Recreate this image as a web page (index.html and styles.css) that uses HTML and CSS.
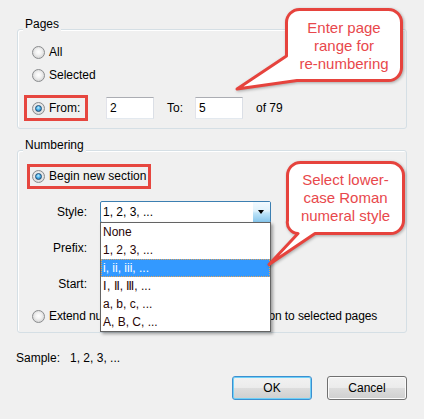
FILE: index.html
```html
<!DOCTYPE html>
<html>
<head>
<meta charset="utf-8">
<link rel="stylesheet" href="styles.css">
</head>
<body>
<div class="dialog">
  <section class="group pages">
    <span class="group-title">Pages</span>
    <div class="opt"><span class="radio"></span>All</div>
    <div class="opt"><span class="radio"></span>Selected</div>
    <div class="range">
      <div class="hl hl-from"><span class="radio on"></span>From:</div>
      <span class="field f-from">2</span>
      <span class="lbl-to">To:</span>
      <span class="field f-to">5</span>
      <span class="of">of 79</span>
    </div>
  </section>

  <section class="group numbering">
    <span class="group-title">Numbering</span>
    <div class="hl hl-begin"><span class="radio on"></span>Begin new section</div>
    <div class="form">
      <span class="lbl">Style:</span>
      <div class="combo-wrap">
        <div class="combo"><span class="combo-text">1, 2, 3, ...</span><span class="combo-btn"><span class="arrow"></span></span></div>
        <ul class="list">
          <li>None</li>
          <li>1, 2, 3, ...</li>
          <li class="sel">i, ii, iii, ...</li>
          <li>Ⅰ, Ⅱ, Ⅲ, ...</li>
          <li>a, b, c, ...</li>
          <li>A, B, C, ...</li>
        </ul>
      </div>
      <span class="lbl">Prefix:</span>
      <span class="field f-prefix"></span>
      <span class="lbl">Start:</span>
      <span class="field f-start"></span>
    </div>
    <div class="opt extend"><span class="radio"></span>Extend numbering used in preceding section to selected pages</div>
  </section>

  <div class="sample"><span>Sample:</span><span>1, 2, 3, ...</span></div>

  <div class="buttons">
    <button class="btn default">OK</button>
    <button class="btn">Cancel</button>
  </div>
</div>

<svg class="callouts" width="424" height="419" viewBox="0 0 424 419">
  <path class="bubble" d="M299.5 9.5 H388.5 A13 13 0 0 1 401.5 22.5 V67.5 A13 13 0 0 1 388.5 80.5 H297 L237 89 L286.5 56 V22.5 A13 13 0 0 1 299.5 9.5 Z"/>
  <path class="bubble" d="M300.5 162.5 H390.5 A13 13 0 0 1 403.5 175.5 V220.5 A13 13 0 0 1 390.5 233.5 H315 L269 264.5 L298 233.5 A11 11 0 0 1 287.5 220.5 V175.5 A13 13 0 0 1 300.5 162.5 Z"/>
</svg>
<p class="callout-text c1">Enter page<br>range for<br>re-numbering</p>
<p class="callout-text c2">Select lower-<br>case Roman<br>numeral style</p>
</body>
</html>
```

FILE: styles.css
```css
html, body {
  margin: 0;
  padding: 0;
}
body {
  width: 424px;
  height: 419px;
  background: #f0f0f0;
  font: 12px/15px "Liberation Sans", Arial, sans-serif;
  color: #000;
  position: relative;
  overflow: hidden;
}
.dialog {
  padding: 0 17px;
}
.group {
  position: relative;
  border: 1px solid #d5dfe5;
  border-radius: 3px;
  padding: 0 14px 7px;
  box-shadow: inset 1px 1px 0 #fff;
}
.group-title {
  position: absolute;
  left: 5px;
  top: -13px;
  padding: 0 2px;
  line-height: 15px;
  background: #f0f0f0;
}
.pages {
  margin-top: 29px;
  padding-top: 11px;
}
.numbering {
  margin-top: 21px;
  padding-top: 13px;
  padding-bottom: 6px;
}
.opt {
  display: flex;
  align-items: center;
  height: 23px;
  white-space: nowrap;
}
.radio {
  flex: none;
  position: relative;
  box-sizing: border-box;
  width: 13px;
  height: 13px;
  margin-right: 4px;
  border-radius: 50%;
  border: 1px solid #8a8c8e;
  background: radial-gradient(circle at 50% 45%, #ffffff 0, #f2f2f2 35%, #d4d4d4 80%, #c8c8c8 100%);
}
.radio.on::after {
  content: "";
  position: absolute;
  left: 2px;
  top: 2px;
  width: 7px;
  height: 7px;
  box-sizing: border-box;
  border-radius: 50%;
  border: 1px solid #1b4a73;
  background: radial-gradient(circle at 45% 35%, #bfeeff 0, #4fb3ea 45%, #1d6aa8 100%);
}
.range {
  display: flex;
  align-items: center;
  margin-top: 8px;
}
.hl {
  display: flex;
  align-items: center;
  box-sizing: border-box;
  border: 3px solid #e6463f;
  white-space: nowrap;
}
.hl-from {
  width: 64px;
  height: 26px;
  padding-left: 5px;
  margin-left: -8px;
}
.hl-begin {
  width: 124px;
  height: 25px;
  padding-left: 2px;
  margin-left: -5px;
}
.field {
  display: block;
  box-sizing: border-box;
  height: 22px;
  border: 1px solid;
  border-color: #abadb3 #dbdfe6 #e3e9ef #e2e3ea;
  background: #fff;
  padding: 0 3px;
  line-height: 20px;
}
.f-from {
  width: 48px;
  margin-left: 18px;
}
.lbl-to {
  margin-left: 13px;
}
.f-to {
  width: 48px;
  margin-left: 12px;
}
.of {
  margin-left: 13px;
}
.form {
  display: grid;
  grid-template-columns: 55px 171px;
  grid-auto-rows: 22px;
  column-gap: 13px;
  row-gap: 14px;
  margin-top: 12px;
}
.lbl {
  justify-self: end;
  align-self: center;
}
.combo-wrap {
  position: relative;
}
.combo {
  display: flex;
  box-sizing: border-box;
  height: 22px;
  border: 1px solid #3c7fb1;
  border-radius: 2px;
  background: #fff;
}
.combo-text {
  flex: 1;
  padding-left: 2px;
  line-height: 20px;
}
.combo-btn {
  position: relative;
  width: 17px;
  background: linear-gradient(#f2faff 0, #dff2fc 45%, #bfe4f8 55%, #86c6ec 100%);
}
.arrow {
  position: absolute;
  left: 5px;
  top: 8px;
  width: 0;
  height: 0;
  border-left: 3.5px solid transparent;
  border-right: 3.5px solid transparent;
  border-top: 4px solid #000;
}
.list {
  position: absolute;
  z-index: 2;
  left: 0;
  top: 21px;
  width: 171px;
  margin: 0;
  padding: 0;
  list-style: none;
  box-sizing: border-box;
  border: 1px solid #646464;
  background: #fff;
  box-shadow: 2px 2px 3px rgba(0, 0, 0, 0.35);
  color: #2a0606;
}
.list li {
  height: 18px;
  line-height: 18px;
  padding-left: 2px;
}
.list li.sel {
  background: #3399ff;
  color: #fff;
  outline: 1px dotted #e2a35a;
  outline-offset: -1px;
}
.f-prefix, .f-start {
  width: 110px;
}
.extend {
  margin-top: 11px;
  height: 20px;
  letter-spacing: -0.1px;
}
.sample {
  display: flex;
  gap: 10px;
  margin: 18px 0 0 -1px;
}
.buttons {
  display: flex;
  justify-content: flex-end;
  gap: 15px;
  margin-top: 10px;
}
.btn {
  width: 80px;
  height: 24px;
  margin: 0;
  padding: 0;
  box-sizing: border-box;
  border: 1px solid #707070;
  border-radius: 3px;
  background: linear-gradient(#f2f2f2 0, #ebebeb 50%, #dddddd 50%, #cfcfcf 100%);
  box-shadow: inset 0 0 0 1px #fbfbfb;
  font: 12px/15px "Liberation Sans", Arial, sans-serif;
  color: #000;
}
.btn.default {
  border-color: #3c8fd0;
  box-shadow: inset 0 0 0 1px #6fd0f7;
}
.callouts {
  position: absolute;
  left: 0;
  top: 0;
  z-index: 5;
  overflow: visible;
  filter: drop-shadow(1px 1px 1.5px rgba(0, 0, 0, 0.3));
}
.bubble {
  fill: #fff;
  stroke: #e6433d;
  stroke-width: 3;
  stroke-linejoin: round;
}
.callout-text {
  position: absolute;
  z-index: 6;
  margin: 0;
  font: 15px/18px "Liberation Sans", Arial, sans-serif;
  color: #e8484c;
  text-align: center;
}
.c1 {
  left: 285px;
  width: 118px;
  top: 19px;
}
.c2 {
  left: 286px;
  width: 119px;
  top: 171px;
}
```
